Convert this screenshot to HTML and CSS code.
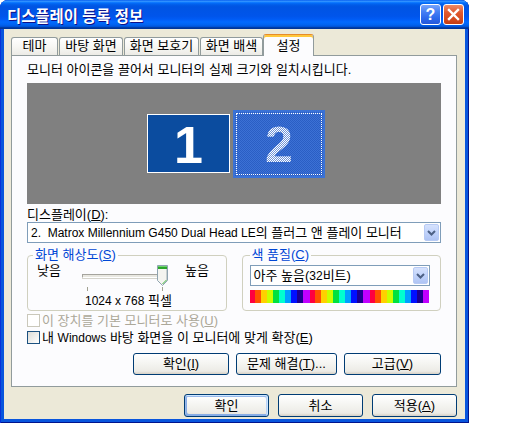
FILE: index.html
```html
<!DOCTYPE html>
<html lang="ko">
<head>
<meta charset="utf-8">
<title>디스플레이 등록 정보</title>
<link rel="stylesheet" href="styles.css">
</head>
<body>
<div class="window">
  <div class="titlebar">
    <div class="title">디스플레이 등록 정보</div>
    <div class="tbtn help">?</div>
    <div class="tbtn close">
      <svg width="13" height="13" viewBox="0 0 13 13"><path d="M2 2 L11 11 M11 2 L2 11" stroke="#fff" stroke-width="2.4" stroke-linecap="square"/></svg>
    </div>
  </div>
  <div class="body">
    <div class="tabs">
      <div class="tab w1">테마</div>
      <div class="tab w2">바탕 화면</div>
      <div class="tab w3">화면 보호기</div>
      <div class="tab w4">화면 배색</div>
      <div class="tab sel">설정</div>
    </div>
    <div class="panel">
      <div class="instr">모니터 아이콘을 끌어서 모니터의 실제 크기와 일치시킵니다.</div>
      <div class="monitors">
        <div class="mon mon1">1</div>
        <div class="mon mon2"><span class="digit2">2</span></div>
      </div>
      <div class="lbl">디스플레이(<u>D</u>):</div>
      <div class="combo">
        <span class="combo-text"><span class="lat">2.&nbsp; Matrox Millennium G450 Dual Head LE</span>의 플러그 앤 플레이 모니터</span>
        <span class="combo-btn"><svg width="9" height="6" viewBox="0 0 9 6"><path d="M1 1 L4.5 4.5 L8 1" fill="none" stroke="#4D6185" stroke-width="2"/></svg></span>
      </div>
      <div class="groups">
        <fieldset class="group res">
          <legend>화면 해상도(<u>S</u>)</legend>
          <div class="res-grid">
            <span class="low">낮음</span>
            <div class="slider">
              <div class="track"></div>
              <svg class="thumb" width="11" height="21" viewBox="0 0 11 21">
                <path d="M0.5 0.5 H10.5 V15.5 L5.5 20.5 L0.5 15.5 Z" fill="#F4F4F0" stroke="#8FA3B0"/>
                <rect x="1" y="1" width="9" height="3" fill="#2BA52B"/>
                <rect x="1" y="1" width="9" height="1" fill="#6FD26F"/>
                <path d="M9.5 15 L5.5 19" stroke="#3DB33D" stroke-width="1"/>
                <path d="M9.5 4 V15" stroke="#C9D0CF" stroke-width="1"/>
              </svg>
              <span class="tick t1"></span>
              <span class="tick t2"></span>
            </div>
            <span class="high">높음</span>
            <span class="restext"><span class="lat">1024 x 768</span> 픽셀</span>
          </div>
        </fieldset>
        <fieldset class="group color">
          <legend>색 품질(<u>C</u>)</legend>
          <div class="combo small">
            <span class="combo-text">아주 높음(<span class="lat">32</span>비트)</span>
            <span class="combo-btn"><svg width="9" height="6" viewBox="0 0 9 6"><path d="M1 1 L4.5 4.5 L8 1" fill="none" stroke="#4D6185" stroke-width="2"/></svg></span>
          </div>
          <div class="strip"></div>
        </fieldset>
      </div>
      <div class="check disabled"><span class="box"></span><span>이 장치를 기본 모니터로 사용(<u>U</u>)</span></div>
      <div class="check"><span class="box"></span><span>내 <span class="lat">Windows</span> 바탕 화면을 이 모니터에 맞게 확장(<u>E</u>)</span></div>
      <div class="panel-buttons">
        <div class="btn pb1">확인(<u>I</u>)</div>
        <div class="btn pb2">문제 해결(<u>T</u>)...</div>
        <div class="btn pb3">고급(<u>V</u>)</div>
      </div>
    </div>
    <div class="dialog-buttons">
      <div class="btn db default">확인</div>
      <div class="btn db">취소</div>
      <div class="btn db">적용(<u>A</u>)</div>
    </div>
  </div>
</div>
</body>
</html>
```
FILE: styles.css
```css
* { box-sizing: border-box; }
html, body { margin: 0; padding: 0; background: #fff; }
body {
  font-family: "Liberation Sans", "Noto Sans CJK KR", sans-serif;
  font-size: 13px;
  line-height: 14px;
  color: #000;
}
.lat { font-size: 12px; }
u { text-decoration: underline; text-underline-offset: 1px; }

.window {
  width: 469px;
  height: 423px;
  background: #0855DD;
  border-radius: 8px 8px 0 0;
  display: flex;
  flex-direction: column;
  overflow: hidden;
  box-shadow: inset 1px 0 #0831D9, inset -1px 0 #00138C, inset 0 -1px #00138C;
}

.titlebar {
  height: 29px;
  flex: none;
  display: flex;
  align-items: center;
  padding: 0 5px 0 7px;
  background: linear-gradient(180deg, #0058EE 0%, #3593FF 4%, #288EFF 6%, #127DFF 8%, #036FFC 10%, #0262EE 14%, #0057E5 20%, #0054E3 24%, #0055EB 56%, #005BF5 66%, #026AFE 76%, #0062EF 86%, #0052D6 92%, #0040AB 94%, #003092 100%);
}
.title {
  flex: 1;
  color: #fff;
  font-family: "Noto Sans CJK KR", sans-serif;
  font-weight: bold;
  font-size: 15.4px;
  text-shadow: 1px 1px #0F1089;
}
.tbtn {
  width: 21px;
  height: 21px;
  border: 1px solid #fff;
  border-radius: 3px;
  margin-left: 2px;
  display: flex;
  align-items: center;
  justify-content: center;
}
.help {
  background: linear-gradient(180deg, #78A4FA 0%, #4680F4 35%, #2C68EC 70%, #2458DA 100%);
  color: #fff;
  font-family: "Liberation Sans", sans-serif;
  font-weight: bold;
  font-size: 16px;
  line-height: 19px;
}
.close {
  background: linear-gradient(180deg, #EE8A66 0%, #E0582E 40%, #D44A1E 75%, #C23C12 100%);
}

.body {
  flex: 1;
  margin: 0 4px 4px 4px;
  background: #ECE9D8;
  padding: 5px 8px 0 7px;
  display: flex;
  flex-direction: column;
}

.tabs {
  display: flex;
  height: 22px;
  margin-bottom: -1px;
  position: relative;
  z-index: 1;
}
.tab {
  height: 18px;
  margin-top: 3px;
  margin-right: 1px;
  border: 1px solid #919B9C;
  border-bottom: none;
  border-radius: 3px 3px 0 0;
  background: linear-gradient(180deg, #FFFFFF 0%, #F7F7F4 50%, #ECEBE6 100%);
  text-align: center;
  line-height: 16px;
  white-space: nowrap;
}
.w1 { width: 47px; }
.w2 { width: 64px; }
.w3 { width: 75px; }
.w4 { width: 63px; margin-right: 0; }
.tab.sel {
  width: 51px;
  height: 22px;
  margin-top: 0;
  background: #FCFCFE;
  border-top: 1px solid #E68B2C;
  box-shadow: inset 0 2px 0 #FFC83C;
  line-height: 20px;
  padding-top: 1px;
}

.panel {
  height: 332px;
  border: 1px solid #919B9C;
  background: #FCFCFE;
  padding: 7px 15px 0 15px;
  display: flex;
  flex-direction: column;
}
.instr { height: 14px; white-space: nowrap; }
.monitors {
  position: relative;
  margin-top: 6px;
  height: 121px;
  background: #808080;
  flex: none;
}
.mon {
  position: absolute;
  display: flex;
  align-items: center;
  justify-content: center;
  font-family: "Liberation Sans", sans-serif;
  font-weight: bold;
  color: #fff;
}
.mon1 {
  left: 120px;
  top: 31px;
  width: 83px;
  height: 59px;
  background: #0B4C9F;
  border: 1px solid #fff;
  font-size: 52px;
  line-height: 52px;
  padding-top: 2px;
}
.mon2 {
  left: 206px;
  top: 27px;
  width: 92px;
  height: 68px;
  background: repeating-conic-gradient(#2A5EC4 0 25%, #3C71D5 0 50%) 0 0 / 2px 2px;
  border: 2px solid #3A72D6;
  outline: 1px dotted #fff;
  outline-offset: -4px;
}
.digit2 {
  font-size: 50px;
  line-height: 50px;
  padding-top: 2px;
  color: transparent;
  background: repeating-conic-gradient(#FFFFFF 0 25%, #6E93D8 0 50%) 0 0 / 2px 2px;
  -webkit-background-clip: text;
  background-clip: text;
}

.lbl { margin-top: 4px; height: 14px; }
.combo {
  height: 21px;
  border: 1px solid #7F9DB9;
  background: #fff;
  display: flex;
  align-items: center;
  padding-left: 3px;
  flex: none;
}
.combo-text { flex: 1; white-space: nowrap; }
.combo-btn {
  width: 15px;
  height: 17px;
  margin-right: 1px;
  flex: none;
  border: 1px solid #B7CAF4;
  border-radius: 2px;
  background: linear-gradient(180deg, #D6E2FD 0%, #C1D3FB 50%, #AFC4F4 100%);
  display: flex;
  align-items: center;
  justify-content: center;
}

.groups {
  display: flex;
  gap: 15px;
  margin-top: 5px;
}
.group {
  margin: 0;
  min-width: 0;
  width: 200px;
  border: 1px solid #D0D0BF;
  border-radius: 4px;
  padding: 2px 5px 2px 5px;
}
.group legend {
  padding: 0 2px;
  color: #0046D5;
  line-height: 14px;
  white-space: nowrap;
}
.res-grid {
  display: grid;
  grid-template-columns: 45px 86px auto;
  grid-template-rows: 30px 14px;
  margin-left: 4px;
}
.low, .high { align-self: start; white-space: nowrap; }
.high { padding-left: 17px; }
.slider { position: relative; }
.track {
  position: absolute;
  left: 0;
  top: 10px;
  width: 84px;
  height: 4px;
  border-top: 1px solid #A5A49E;
  border-left: 1px solid #A5A49E;
  border-bottom: 1px solid #FFFFFF;
  border-right: 1px solid #FFFFFF;
  background: #E9E8E1;
  box-shadow: 0 1px 0 #D5D4CC;
}
.thumb { position: absolute; left: 75px; top: 1px; }
.tick {
  position: absolute;
  top: 23px;
  width: 1px;
  height: 4px;
  background: #A1A192;
}
.t1 { left: 5px; }
.t2 { left: 80px; }
.restext { grid-column: 2 / span 2; margin-left: 3px; white-space: nowrap; }

.color { padding: 0 6px 3px 7px; }
.combo.small { width: 180px; margin-top: 3px; }
.strip {
  width: 179px;
  height: 13px;
  margin-top: 4px;
  background: repeating-linear-gradient(90deg,
    #FF0040 0 5px, #FF5000 5px 11px, #FFD000 11px 17px, #C8FF00 17px 23px,
    #00E040 23px 29px, #00FFD0 29px 35px, #00A0FF 35px 41px, #0010FF 41px 47px,
    #1C0090 47px 53px, #C000FF 53px 60px);
}

.check {
  display: flex;
  align-items: center;
  gap: 2px;
  height: 17px;
  white-space: nowrap;
}
.groups + .check { margin-top: 1px; }
.box {
  width: 13px;
  height: 13px;
  flex: none;
  border: 1px solid #1C5180;
  background: linear-gradient(135deg, #DCDCD7 0%, #FFFFFF 100%);
}
.check.disabled { color: #ACA899; }
.check.disabled .box { border-color: #CAC8BB; background: #fff; }

.panel-buttons {
  display: flex;
  justify-content: flex-end;
  gap: 7px;
  margin-top: 7px;
}
.btn {
  height: 22px;
  border: 1px solid #003C74;
  border-radius: 3px;
  background: linear-gradient(180deg, #FFFFFF 0%, #F4F4F0 50%, #ECEBE6 86%, #D6D0C5 100%);
  display: flex;
  align-items: center;
  justify-content: center;
  white-space: nowrap;
}
.pb1 { width: 96px; }
.pb2 { width: 101px; }
.pb3 { width: 97px; }

.dialog-buttons {
  display: flex;
  justify-content: flex-end;
  gap: 9px;
  margin-top: 7px;
}
.db { width: 85px; height: 23px; }
.default {
  box-shadow: inset -1px 1px #CEE7FF, inset 1px 2px #98B8EA, inset -2px 2px #BCD4F6, inset 1px -1px #89ADE4, inset 2px -2px #89ADE4;
}
```
